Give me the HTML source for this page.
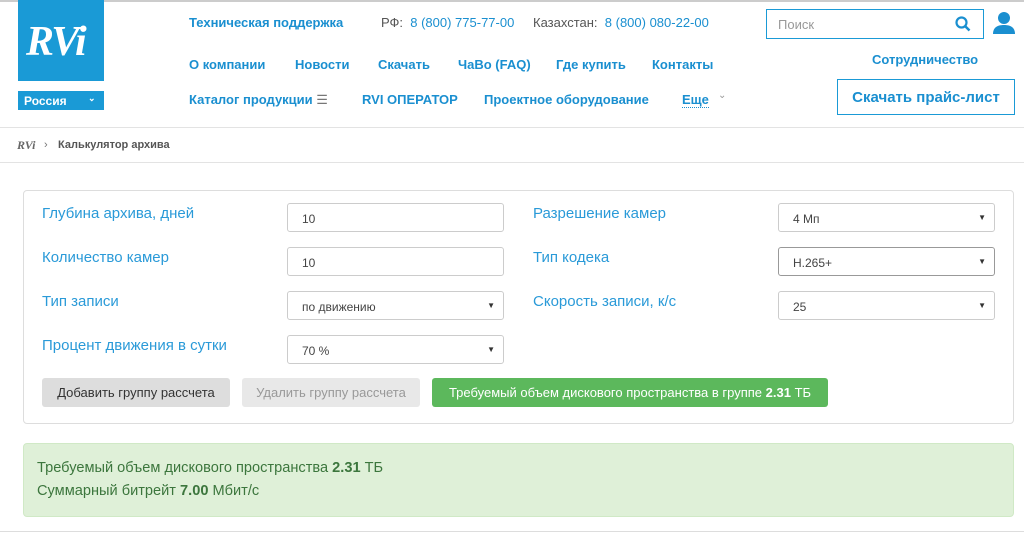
<!DOCTYPE html>
<html><head><meta charset="utf-8"><style>
*{box-sizing:border-box;margin:0;padding:0}
body{width:1024px;height:533px;overflow:hidden;background:#fff;font-family:"Liberation Sans",sans-serif;position:relative;color:#333}
.a{position:absolute;white-space:nowrap}
.bl{color:#1a8fd0}
.nav{font-weight:bold;font-size:13px;color:#1a8fd0}
.lbl{font-size:15px;color:#2a9ad8}
.in{position:absolute;border:1px solid #ccc;border-radius:3px;height:29px;font-size:12px;padding:8px 0 0 14px;color:#444;background:#fff}
.in.s::after{content:"▼";position:absolute;right:8px;top:9px;font-size:8px;color:#333}
</style></head><body>
<div class="a" style="left:0;top:0;width:1024px;height:2px;background:#ccc"></div>
<div class="a" style="left:18px;top:0;width:86px;height:81px;background:#1a9ad6"></div>
<div class="a" style="left:26px;top:18px;font:italic bold 42px 'Liberation Serif',serif;color:#fff;letter-spacing:-2px">RVi</div>
<div class="a" style="left:18px;top:91px;width:86px;height:19px;background:#1a9ad6;color:#fff;font-weight:bold;font-size:12px;padding:3px 0 0 6px">Россия<span style="position:absolute;left:70px;top:2px;font-size:9px">⌄</span></div>
<div class="a nav" style="left:189px;top:15px">Техническая поддержка</div>
<div class="a" style="left:381px;top:15px;font-size:13px;color:#555">РФ: <span class="bl">&nbsp;8 (800) 775-77-00</span></div>
<div class="a" style="left:533px;top:15px;font-size:13px;color:#555">Казахстан: <span class="bl">&nbsp;8 (800) 080-22-00</span></div>
<div class="a" style="left:766px;top:9px;width:218px;height:30px;border:1px solid #1a9ad6;font-size:13px;color:#999;padding:7px 0 0 11px">Поиск
<svg style="position:absolute;right:12px;top:6px" width="16" height="16" viewBox="0 0 16 16"><circle cx="6.5" cy="6.5" r="5" fill="none" stroke="#1a8fd0" stroke-width="2.2"/><path d="M10 10l4.5 4.5" stroke="#1a8fd0" stroke-width="2.5"/></svg></div>
<svg class="a" style="left:993px;top:11px" width="22" height="24" viewBox="0 0 22 24"><circle cx="11" cy="7" r="6" fill="#1a8fd0"/><path d="M0 23c0-7 5-9 11-9s11 2 11 9z" fill="#1a8fd0"/></svg>
<div class="a nav" style="left:189px;top:57px">О компании</div>
<div class="a nav" style="left:295px;top:57px">Новости</div>
<div class="a nav" style="left:378px;top:57px">Скачать</div>
<div class="a nav" style="left:458px;top:57px">ЧаВо (FAQ)</div>
<div class="a nav" style="left:556px;top:57px">Где купить</div>
<div class="a nav" style="left:652px;top:57px">Контакты</div>
<div class="a nav" style="left:872px;top:52px">Сотрудничество</div>
<div class="a nav" style="left:189px;top:92px">Каталог продукции <span style="color:#777;font-weight:normal">☰</span></div>
<div class="a nav" style="left:362px;top:92px">RVI ОПЕРАТОР</div>
<div class="a nav" style="left:484px;top:92px">Проектное оборудование</div>
<div class="a nav" style="left:682px;top:92px;border-bottom:1px dotted #1a8fd0">Еще</div>
<div class="a" style="left:718px;top:90px;font-size:10px;color:#999">⌄</div>
<div class="a" style="left:837px;top:79px;width:178px;height:36px;border:1px solid #1a9ad6;font-size:15px;font-weight:bold;color:#1a8fd0;text-align:center;padding-top:9px">Скачать прайс-лист</div>
<div class="a" style="left:0;top:127px;width:1024px;height:1px;background:#e3e3e3"></div>
<div class="a" style="left:17px;top:138px;font:italic bold 12px 'Liberation Serif',serif;color:#666">RVi</div>
<div class="a" style="left:44px;top:139px;font-size:11px;color:#777">›</div>
<div class="a" style="left:58px;top:139px;font-size:11px;font-weight:bold;color:#555">Калькулятор архива</div>
<div class="a" style="left:0;top:162px;width:1024px;height:1px;background:#e3e3e3"></div>
<div class="a" style="left:23px;top:190px;width:991px;height:234px;border:1px solid #ddd;border-radius:4px"></div>
<div class="a lbl" style="left:42px;top:205px">Глубина архива, дней</div>
<div class="a lbl" style="left:42px;top:249px">Количество камер</div>
<div class="a lbl" style="left:42px;top:293px">Тип записи</div>
<div class="a lbl" style="left:42px;top:337px">Процент движения в сутки</div>
<div class="in" style="left:287px;top:203px;width:217px">10</div>
<div class="in" style="left:287px;top:247px;width:217px">10</div>
<div class="in s" style="left:287px;top:291px;width:217px">по движению</div>
<div class="in s" style="left:287px;top:335px;width:217px">70 %</div>
<div class="a lbl" style="left:533px;top:205px">Разрешение камер</div>
<div class="a lbl" style="left:533px;top:249px">Тип кодека</div>
<div class="a lbl" style="left:533px;top:293px">Скорость записи, к/с</div>
<div class="in s" style="left:778px;top:203px;width:217px">4 Мп</div>
<div class="in s" style="left:778px;top:247px;width:217px;border-color:#999">H.265+</div>
<div class="in s" style="left:778px;top:291px;width:217px">25</div>
<div class="a" style="left:42px;top:378px;width:188px;height:29px;background:#ddd;border-radius:3px;font-size:13px;color:#333;text-align:center;padding-top:7px">Добавить группу рассчета</div>
<div class="a" style="left:242px;top:378px;width:178px;height:29px;background:#e8e8e8;border-radius:3px;font-size:13px;color:#999;text-align:center;padding-top:7px">Удалить группу рассчета</div>
<div class="a" style="left:432px;top:378px;width:396px;height:29px;background:#5cb85c;border-radius:3px;font-size:13px;color:#fff;text-align:center;padding-top:7px">Требуемый объем дискового пространства в группе <b>2.31</b> ТБ</div>
<div class="a" style="left:23px;top:443px;width:991px;height:74px;background:#dff0d8;border:1px solid #d0e9c6;border-radius:4px"></div>
<div class="a" style="left:37px;top:460px;font-size:14.6px;color:#3c763d">Требуемый объем дискового пространства <b>2.31</b> ТБ</div>
<div class="a" style="left:37px;top:483px;font-size:14.6px;color:#3c763d">Суммарный битрейт <b>7.00</b> Мбит/с</div>
<div class="a" style="left:0;top:531px;width:1024px;height:1px;background:#ddd"></div>
</body></html>
